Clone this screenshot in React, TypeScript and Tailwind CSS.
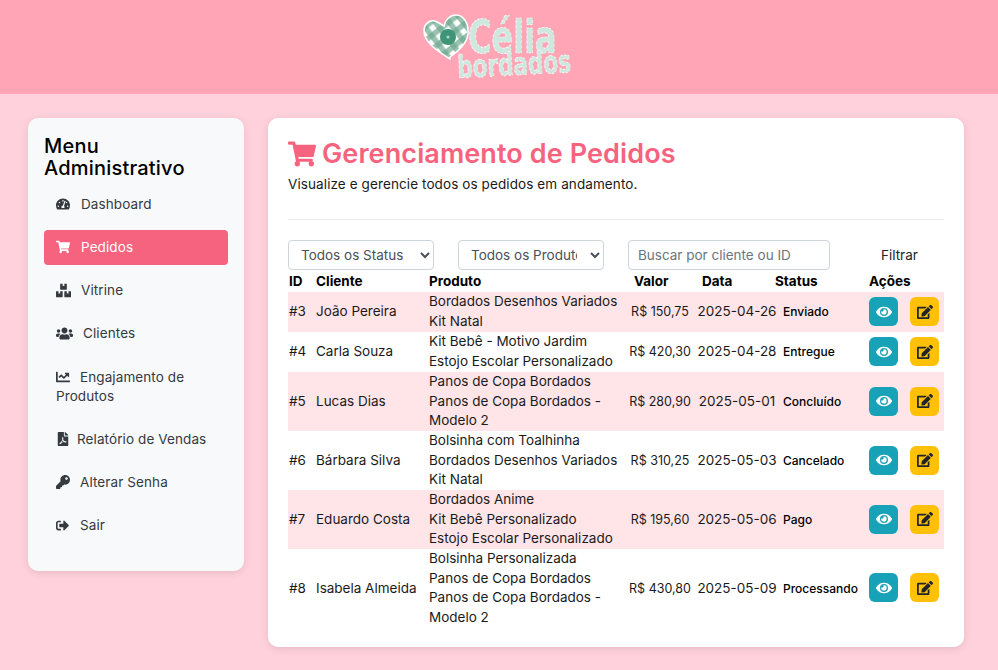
import { FC, ReactNode } from "react";
import {
  FaChartLine,
  FaBoxes,
  FaEdit,
  FaEye,
  FaFilePdf,
  FaKey,
  FaShoppingCart,
  FaSignOutAlt,
  FaTachometerAlt,
  FaUsers,
} from "react-icons/fa";

const font = "font-['Inter','Noto_Sans',sans-serif]";

const Logo: FC = () => (
  <svg width="152" height="74" viewBox="0 0 152 74" aria-label="Célia Bordados">
    <defs>
      <pattern id="gingham" width="11" height="11" patternUnits="userSpaceOnUse" patternTransform="rotate(-38)">
        <rect width="11" height="11" fill="#ffffff" />
        <rect width="5.5" height="11" fill="#6fa890" opacity="0.7" />
        <rect width="11" height="5.5" fill="#6fa890" opacity="0.7" />
      </pattern>
    </defs>
    <path
      d="M27 48 C16 41 1 32 1 20 C1 11 9 8 14 11 C17 12 19 14 21 15 C22 9 27 4 33 4 C41 4 46 13 45 23 C44 33 35 40 27 46 Z"
      transform="translate(0 1)"
      fill="url(#gingham)"
      stroke="#ffffff"
      strokeWidth="1.5"
    />
    <circle cx="25" cy="27" r="8" fill="#3f9478" />
    <circle cx="25" cy="27" r="1.6" fill="#a9d8c6" />
    <text
      transform="translate(45 43) scale(1 1.45)"
      fontFamily="'DejaVu Sans', sans-serif"
      fontWeight="700"
      fontSize="32"
      fill="#cfe8df"
      stroke="#ffffff"
      strokeWidth="0.5"
      strokeDasharray="2 1.5"
    >
      Célia
    </text>
    <text
      transform="translate(35 68) rotate(-3) scale(1 1.45)"
      fontFamily="'DejaVu Sans', sans-serif"
      fontWeight="700"
      fontSize="21.5"
      fill="#cfe8df"
      stroke="#ffffff"
      strokeWidth="0.5"
      strokeDasharray="2 1.5"
    >
      bordados
    </text>
  </svg>
);

type MenuItem = { label: string; icon: ReactNode; active?: boolean };

const menu: MenuItem[] = [
  { label: "Dashboard", icon: <FaTachometerAlt className="inline-block mr-[11px] -mt-[6px] -mb-[4px] text-[14px]" /> },
  { label: "Pedidos", icon: <FaShoppingCart className="inline-block mr-[11px] -mt-[6px] -mb-[4px] text-[14px]" />, active: true },
  { label: "Vitrine", icon: <FaBoxes className="inline-block mr-[10px] -mt-[6px] -mb-[4px] text-[15px]" /> },
  { label: "Clientes", icon: <FaUsers className="inline-block mr-[10px] -mt-[6px] -mb-[4px] text-[17px]" /> },
  { label: "Engajamento de Produtos", icon: <FaChartLine className="inline-block mr-[10px] -mt-[6px] -mb-[4px] text-[14px]" /> },
  { label: "Relatório de Vendas", icon: <FaFilePdf className="inline-block mr-[7px] -mt-[6px] -mb-[4px] text-[14px]" /> },
  { label: "Alterar Senha", icon: <FaKey className="inline-block mr-[10px] -mt-[6px] -mb-[4px] text-[14px]" /> },
  { label: "Sair", icon: <FaSignOutAlt className="inline-block mr-[11px] -mt-[6px] -mb-[4px] text-[13px]" /> },
];

const Sidebar: FC = () => (
  <aside className="w-[216px] shrink-0 self-start bg-[#f8f9fa] rounded-[10px] p-4 pt-[17px] pb-[28px] shadow-[0_2px_8px_rgba(0,0,0,0.1)]">
    <h2 className="text-[20px] leading-[22px] tracking-[0.2px] font-medium text-black mb-[7.5px]">
      Menu Administrativo
    </h2>
    <nav className="flex flex-col gap-[8.25px]">
      {menu.map((item) => (
        <a
          key={item.label}
          className={`block pl-3 pr-3 py-2 rounded-[4px] text-[13.5px] tracking-[0.1px] leading-[19px] ${
            item.active ? "bg-[#f5637e] text-white" : "text-[#343a40]"
          }`}
        >
          {item.icon}
          {item.label}
        </a>
      ))}
    </nav>
  </aside>
);

type Order = {
  id: string;
  client: string;
  products: string[];
  value: string;
  date: string;
  status: string;
  height: string;
};

const orders: Order[] = [
  { id: "#3", client: "João Pereira", products: ["Bordados Desenhos Variados", "Kit Natal"], value: "R$ 150,75", date: "2025-04-26", status: "Enviado", height: "h-[40px]" },
  { id: "#4", client: "Carla Souza", products: ["Kit Bebê - Motivo Jardim", "Estojo Escolar Personalizado"], value: "R$ 420,30", date: "2025-04-28", status: "Entregue", height: "h-[40px]" },
  { id: "#5", client: "Lucas Dias", products: ["Panos de Copa Bordados", "Panos de Copa Bordados -", "Modelo 2"], value: "R$ 280,90", date: "2025-05-01", status: "Concluído", height: "h-[59px]" },
  { id: "#6", client: "Bárbara Silva", products: ["Bolsinha com Toalhinha", "Bordados Desenhos Variados", "Kit Natal"], value: "R$ 310,25", date: "2025-05-03", status: "Cancelado", height: "h-[59px]" },
  { id: "#7", client: "Eduardo Costa", products: ["Bordados Anime", "Kit Bebê Personalizado", "Estojo Escolar Personalizado"], value: "R$ 195,60", date: "2025-05-06", status: "Pago", height: "h-[59px]" },
  { id: "#8", client: "Isabela Almeida", products: ["Bolsinha Personalizada", "Panos de Copa Bordados", "Panos de Copa Bordados -", "Modelo 2"], value: "R$ 430,80", date: "2025-05-09", status: "Processando", height: "h-[78px]" },
];

const OrdersTable: FC = () => (
  <table className="w-full table-fixed border-collapse text-[13.5px] leading-[19.5px] text-[#1a1a1a]">
    <colgroup>
      <col className="w-[28px]" />
      <col className="w-[113px]" />
      <col className="w-[196px]" />
      <col className="w-[70px]" />
      <col className="w-[84px]" />
      <col className="w-[90px]" />
      <col />
    </colgroup>
    <thead>
      <tr className="h-[20px] text-left text-black font-bold">
        <th className="pl-[1px] font-bold">ID</th>
        <th className="font-bold">Cliente</th>
        <th className="font-bold">Produto</th>
        <th className="pl-[9px] font-bold">Valor</th>
        <th className="pl-[7px] font-bold">Data</th>
        <th className="font-bold">
          <span className="-ml-[4px]">Status</span>
        </th>
        <th className="font-bold">Ações</th>
      </tr>
    </thead>
    <tbody>
      {orders.map((o, idx) => (
        <tr key={o.id} className={`${o.height} ${idx % 2 === 0 ? "bg-[#ffe4e8]" : "bg-white"}`}>
          <td className="pl-[1px] pt-[1px]">{o.id}</td>
          <td className="pt-[1px] whitespace-nowrap">{o.client}</td>
          <td className="pt-[0.5px] whitespace-nowrap">
            {o.products.map((p) => (
              <div key={p}>{p}</div>
            ))}
          </td>
          <td className="pt-[1px] text-center text-[12.5px] whitespace-nowrap">{o.value}</td>
          <td className="pt-[1px] text-center whitespace-nowrap">{o.date}</td>
          <td className="pl-[4px] pt-[1px] text-[12px] font-medium text-black whitespace-nowrap">{o.status}</td>
          <td>
            <div className="flex gap-3">
              <button className="w-[29px] h-[29px] rounded-[6px] bg-[#17a2b8] text-white flex items-center justify-center text-[16px]">
                <FaEye />
              </button>
              <button className="w-[29px] h-[29px] rounded-[6px] bg-[#ffc107] text-[#212529] flex items-center justify-center text-[16px]">
                <FaEdit />
              </button>
            </div>
          </td>
        </tr>
      ))}
    </tbody>
  </table>
);

export default function App() {
  return (
    <div className={`${font} min-h-[670px] bg-[#ffd1dc]`}>
      <header className="h-[94px] bg-[#ffa5b5] flex justify-center pt-[10px]">
        <Logo />
      </header>
      <div className="flex gap-6 px-7 pt-6">
        <Sidebar />
        <main className="w-[696px] bg-white rounded-[10px] p-5 shadow-[0_2px_8px_rgba(0,0,0,0.1)]">
          <h1 className="flex items-center gap-[6px] text-[27px] leading-[32px] tracking-[0.1px] font-semibold text-[#f5637e]">
            <FaShoppingCart className="text-[28px]" />
            Gerenciamento de Pedidos
          </h1>
          <p className="mt-[5px] text-[13.5px] tracking-[0.1px] leading-[19.5px] text-[#1a1a1a]">
            Visualize e gerencie todos os pedidos em andamento.
          </p>
          <hr className="mt-[24px] mb-5 border-t border-[#e9ecef]" />
          <div className="flex items-center mb-[2px]">
            <select className="w-[146px] h-[30px] pl-2 pr-[10px] rounded-[4px] border border-[#ced4da] bg-white text-[13.5px] text-[#495057]">
              <option>Todos os Status</option>
            </select>
            <select className="ml-6 w-[146px] h-[30px] pl-2 pr-[10px] rounded-[4px] border border-[#ced4da] bg-white text-[13.5px] text-[#495057]">
              <option>Todos os Produtos</option>
            </select>
            <input
              className="ml-6 w-[202px] h-[30px] px-[9px] rounded-[4px] border border-[#ced4da] bg-white text-[13.5px] placeholder:text-[#6c757d]"
              placeholder="Buscar por cliente ou ID"
            />
            <button className="ml-[51px] pt-[1px] text-[13.5px] text-[#212529]">Filtrar</button>
          </div>
          <OrdersTable />
        </main>
      </div>
    </div>
  );
}
